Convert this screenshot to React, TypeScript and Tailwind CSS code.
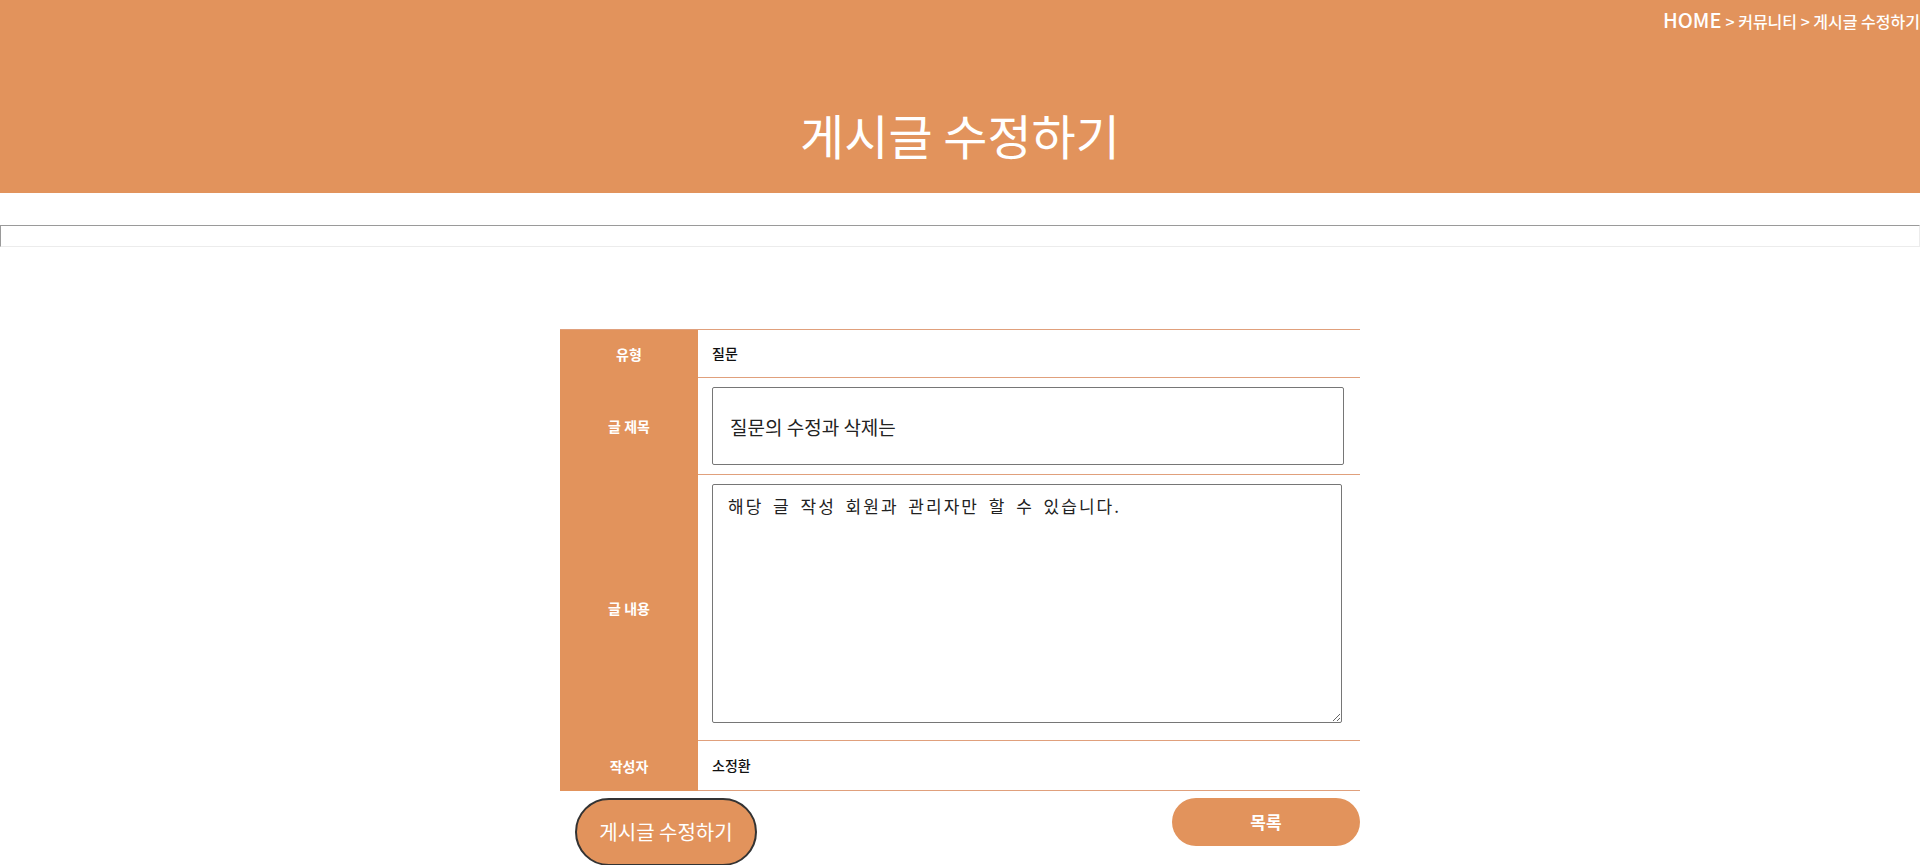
import React from 'react';

const orange = 'bg-[#e2935c]';

function Row({ label, height, children }: { label: string; height: string; children: React.ReactNode }) {
  return (
    <div className={`grid grid-cols-[138px_1fr] ${height}`}>
      <div className={`${orange} flex items-center justify-center text-[14px] font-bold text-white`}>
        {label}
      </div>
      <div className="border-b border-[#e0a07c] pl-[14px] pr-[16px]">{children}</div>
    </div>
  );
}

export default function App() {
  return (
    <div className="min-h-screen bg-white font-['Noto_Sans_CJK_KR',sans-serif] text-[#111]">
      {/* Header */}
      <header className={`${orange} h-[193px] text-white flex flex-col`}>
        <div className="flex justify-end items-baseline pr-0 pt-[5px] leading-[30px]">
          <span className="text-[20px] font-medium">HOME</span>
          <span className="text-[16px] font-medium ml-[4px]">&gt; 커뮤니티 &gt; 게시글 수정하기</span>
        </div>
        <h1 className="text-center text-[48px] font-normal leading-[60px] mt-[68px]">게시글 수정하기</h1>
      </header>

      <div className="mt-[32px] h-[22px] border border-t-[#9a9a9a] border-l-[#9a9a9a] border-b-[#ececec] border-r-[#ececec]" />

      {/* Form table */}
      <main className="w-[800px] mx-auto mt-[82px]">
        <div className="border-t border-[#e0a07c]">
          <Row label="유형" height="h-[48px]">
            <div className="h-full flex items-center text-[14px] font-medium">질문</div>
          </Row>
          <Row label="글 제목" height="h-[97px]">
            <div className="pt-[9px]">
              <input
                defaultValue="질문의 수정과 삭제는"
                className="w-full h-[78px] border border-[#767676] rounded-[2px] pl-[17px] text-[19px] text-[#222] outline-none"
              />
            </div>
          </Row>
          <Row label="글 내용" height="h-[266px]">
            <div className="pt-[9px]">
              <textarea
                defaultValue="해당 글 작성 회원과 관리자만 할 수 있습니다."
                className="block w-[630px] h-[239px] border border-[#767676] rounded-[2px] pl-[15px] pt-[10px] text-[17px] leading-[22px] tracking-[2px] [word-spacing:4px] text-[#222] outline-none"
              />
            </div>
          </Row>
          <Row label="작성자" height="h-[50px]">
            <div className="h-full flex items-center text-[14px] font-medium">소정환</div>
          </Row>
        </div>

        <div className="mt-[7px] flex justify-between items-start">
          <button className={`${orange} ml-[15px] w-[182px] h-[68px] rounded-full border-2 border-[#333] text-white text-[20px]`}>
            게시글 수정하기
          </button>
          <button className={`${orange} w-[188px] h-[48px] rounded-full text-white text-[17px] font-bold`}>
            목록
          </button>
        </div>
      </main>
    </div>
  );
}
